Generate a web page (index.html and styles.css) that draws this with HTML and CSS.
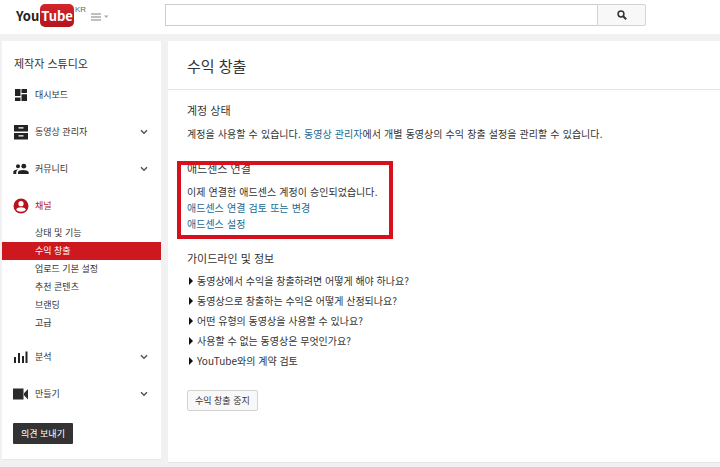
FILE: index.html
```html
<!DOCTYPE html>
<html lang="ko">
<head>
<meta charset="utf-8">
<title>수익 창출 - YouTube</title>
<link rel="stylesheet" href="styles.css">
</head>
<body>
<header class="topbar">
  <a class="logo" href="#"><span class="logo-you">You</span><span class="logo-tube">Tube</span><span class="logo-region">KR</span></a>
  <button class="guide" type="button" aria-label="가이드">
    <svg width="18" height="8" viewBox="0 0 18 8"><path d="M0 1h10M0 4h10M0 7h10" stroke="#aaa" stroke-width="1.6"/><path d="M13 2.5h4.500L15.200 5z" fill="#aaa"/></svg>
  </button>
  <form class="search">
    <input class="search-box" type="text" aria-label="검색">
    <button class="search-button" type="button" aria-label="검색">
      <svg width="10" height="10" viewBox="0 0 10 10" fill="none" stroke="#333"><circle cx="4" cy="4" r="2.900" stroke-width="1.500"/><path d="M6.200 6.200 9.200 9.200" stroke-width="2"/></svg>
    </button>
  </form>
</header>
<div class="page">
  <nav class="sidebar">
    <h2 class="sidebar-title">제작자 스튜디오</h2>
    <a class="item" href="#">
      <svg class="icon" viewBox="0 0 16 16" fill="#222"><path d="M2 2h5.500v7H2zM8.500 2H14v4H8.500zM2 10.500h5.500V14H2zM8.500 7.300H14V14H8.500z"/></svg>
      <span>대시보드</span>
    </a>
    <a class="item" href="#">
      <svg class="icon" viewBox="0 0 16 16"><path fill="#222" d="M1 1h14v6.500H1zM1 9h14v6.500H1z"/><path stroke="#fff" stroke-width="1.200" d="M5.500 3.800h5M5.500 11.800h5"/></svg>
      <span>동영상 관리자</span>
      <svg class="chevron" viewBox="0 0 8 6"><path d="M1 1.200 4 4.200 7 1.200"/></svg>
    </a>
    <a class="item" href="#">
      <svg class="icon" viewBox="0 0 16 16" fill="#222"><circle cx="5" cy="5.200" r="2"/><circle cx="10.800" cy="5.200" r="2.400"/><path d="M.3 13v-2c0-1.800 2.500-2.700 5-2.500-1.300.7-2 1.500-2 2.800V13zM5 13v-1.800c0-3 9.800-3 10.700 0V13z"/></svg>
      <span>커뮤니티</span>
      <svg class="chevron" viewBox="0 0 8 6"><path d="M1 1.200 4 4.200 7 1.200"/></svg>
    </a>
    <a class="item item-open" href="#">
      <svg class="icon" viewBox="0 0 16 16"><circle cx="8" cy="8" r="7.500" fill="#b8131b"/><circle cx="8" cy="5.700" r="2.600" fill="#fff"/><path fill="#fff" d="M3.200 11.500c1-3 8.600-3 9.600 0C11.500 14.400 4.500 14.400 3.200 11.500z"/></svg>
      <span>채널</span>
    </a>
    <ul class="subitems">
      <li><a href="#">상태 및 기능</a></li>
      <li><a class="selected" href="#">수익 창출</a></li>
      <li><a href="#">업로드 기본 설정</a></li>
      <li><a href="#">추천 콘텐츠</a></li>
      <li><a href="#">브랜딩</a></li>
      <li><a href="#">고급</a></li>
    </ul>
    <a class="item" href="#">
      <svg class="icon" viewBox="0 0 16 16" fill="#222"><path d="M1 8h2v6H1zM5 4h2v10H5zM9 7h2v7H9zM12.500 2.500h2V14h-2z"/></svg>
      <span>분석</span>
      <svg class="chevron" viewBox="0 0 8 6"><path d="M1 1.200 4 4.200 7 1.200"/></svg>
    </a>
    <a class="item" href="#">
      <svg class="icon" viewBox="0 0 16 16" fill="#2b2b2b"><path d="M0 2.500h10.500v11H0zM15 3v10.500L11 9.300V7.200z"/></svg>
      <span>만들기</span>
      <svg class="chevron" viewBox="0 0 8 6"><path d="M1 1.200 4 4.200 7 1.200"/></svg>
    </a>
    <button class="feedback" type="button">의견 보내기</button>
  </nav>
  <main class="content">
    <h1 class="content-title">수익 창출</h1>
    <div class="content-body">
      <section class="section">
        <h2>계정 상태</h2>
        <p>계정을 사용할 수 있습니다. <a href="#">동영상 관리자</a>에서 개별 동영상의 수익 창출 설정을 관리할 수 있습니다.</p>
      </section>
      <section class="section marked">
        <h2>애드센스 연결</h2>
        <p>이제 연결한 애드센스 계정이 승인되었습니다.</p>
        <p><a href="#">애드센스 연결 검토 또는 변경</a></p>
        <p><a href="#">애드센스 설정</a></p>
      </section>
      <section class="section">
        <h2>가이드라인 및 정보</h2>
        <ul class="topics">
          <li><button type="button">동영상에서 수익을 창출하려면 어떻게 해야 하나요?</button></li>
          <li><button type="button">동영상으로 창출하는 수익은 어떻게 산정되나요?</button></li>
          <li><button type="button">어떤 유형의 동영상을 사용할 수 있나요?</button></li>
          <li><button type="button">사용할 수 없는 동영상은 무엇인가요?</button></li>
          <li><button type="button">YouTube와의 계약 검토</button></li>
        </ul>
      </section>
      <button class="stop" type="button">수익 창출 중지</button>
    </div>
  </main>
</div>
</body>
</html>
```
FILE: styles.css
```css
* {
  box-sizing: border-box;
}

body {
  margin: 0;
  background: #f1f1f1;
  color: #333;
  font: 9px/16px "Noto Sans CJK KR", sans-serif;
}

h1, h2, p, ul {
  margin: 0;
  padding: 0;
  font-weight: 400;
}

ul {
  list-style: none;
}

a {
  color: inherit;
  text-decoration: none;
}

button {
  padding: 0;
  border: 0;
  background: none;
  color: inherit;
  font: inherit;
}

svg {
  display: block;
}

.topbar {
  display: flex;
  align-items: flex-start;
  height: 34px;
  padding: 4px 74px 0 16px;
  background: #fff;
}

.logo {
  display: flex;
  flex: none;
  width: 75px;
  font-weight: 700;
  font-size: 13px;
  line-height: 23px;
  color: #222;
}

.logo-tube {
  margin-left: 1px;
  padding: 0 1px;
  border-radius: 5px;
  background: linear-gradient(#d3262b, #b3141a);
  color: #fff;
}

.logo-region {
  margin-left: 1px;
  font: 8px/12px "Liberation Sans", sans-serif;
  color: #666;
}

.guide {
  margin-top: 9px;
}

.search {
  display: flex;
  flex: 1;
  height: 22px;
  margin-left: 56px;
}

.search-box {
  flex: 1;
  min-width: 0;
  padding: 0 4px;
  border: 1px solid #ccc;
  border-right: 0;
  background: #fff;
  font: inherit;
}

.search-button {
  display: flex;
  align-items: center;
  justify-content: center;
  width: 49px;
  border: 1px solid #d3d3d3;
  border-radius: 0 2px 2px 0;
  background: #f8f8f8;
}

.page {
  display: flex;
  align-items: flex-start;
  gap: 7px;
  padding: 7px 0 0 2px;
}

.sidebar {
  flex: 0 0 159px;
  padding: 9px 0 15px;
  border-bottom: 1px solid #e8e8e8;
  background: #fff;
}

.sidebar-title {
  padding-left: 12px;
  font-size: 11px;
  line-height: 26px;
}

.item {
  display: flex;
  align-items: center;
  gap: 6px;
  height: 37px;
  padding: 0 13px 0 11px;
}

.item-open {
  color: #b8131b;
}

.icon {
  width: 16px;
  height: 16px;
}

.chevron {
  width: 8px;
  height: 6px;
  margin-left: auto;
  fill: none;
  stroke: #555;
  stroke-width: 1.5;
}

.subitems {
  padding-bottom: 6px;
}

.subitems a {
  display: block;
  padding-left: 33px;
  line-height: 18px;
}

.subitems .selected {
  background: #cc181e;
  color: #fff;
}

.feedback {
  height: 21px;
  margin: 11px 0 0 11px;
  padding: 0 8px;
  border-radius: 1px;
  background: #333;
  color: #fff;
}

.content {
  flex: 1;
  min-width: 0;
  padding-bottom: 51px;
  border-bottom: 1px solid #e5e5e5;
  background: #fff;
}

.content-title {
  padding: 2px 19px 0;
  border-bottom: 1px solid #e5e5e5;
  font-size: 15px;
  line-height: 46px;
}

.content-body {
  padding: 12px 19px 0;
}

.section {
  margin-bottom: 17px;
}

.section h2 {
  margin-bottom: 9px;
  font-size: 11px;
}

.section p {
  font-family: "DejaVu Sans", "Noto Sans CJK KR", sans-serif;
  font-size: 10px;
}

.section p a {
  color: #1b6a93;
}

.marked {
  position: relative;
  width: 196px;
}

.marked::after {
  content: "";
  position: absolute;
  inset: 1px -10px -6px;
  border: 4px solid #d8101e;
}

.topics {
  margin: -4px 0 19px;
}

.topics button {
  display: flex;
  align-items: center;
  gap: 4px;
  font-size: 10px;
  line-height: 20px;
}

.topics button::before {
  content: "";
  margin-left: 2px;
  border-left: 4px solid #111;
  border-top: 4px solid transparent;
  border-bottom: 4px solid transparent;
}

.stop {
  height: 21px;
  padding: 0 7px;
  border: 1px solid #d3d3d3;
  border-radius: 2px;
  background: #f8f8f8;
}
```
